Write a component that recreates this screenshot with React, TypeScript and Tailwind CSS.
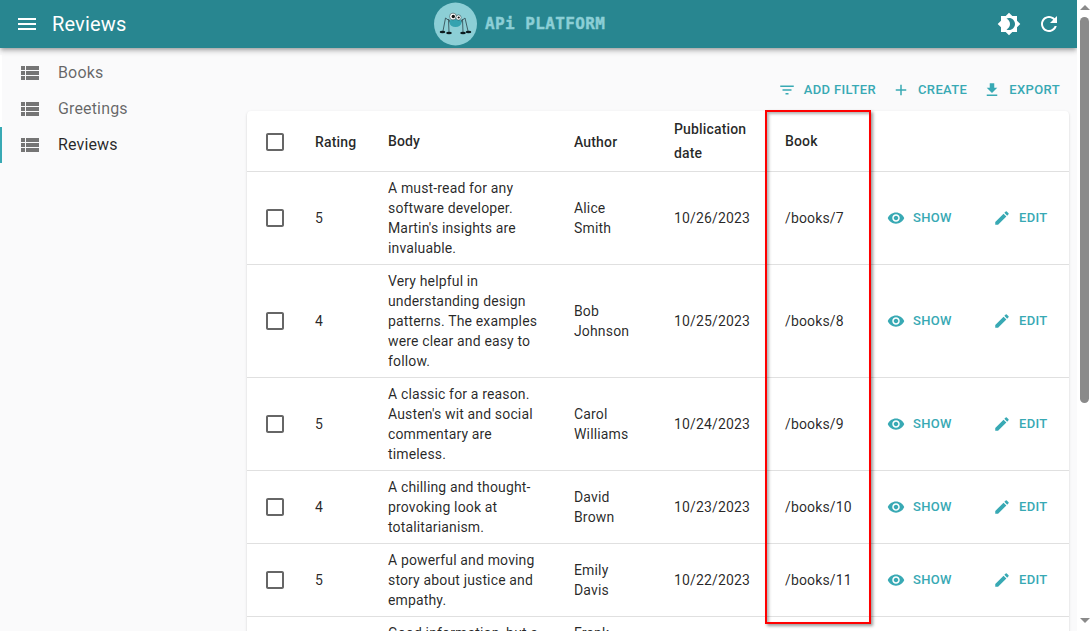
import React from "react";

const paths = {
  menu: "M3 18h18v-2H3v2zm0-5h18v-2H3v2zm0-7v2h18V6H3z",
  list: "M3 14h4v-4H3v4zm0 5h4v-4H3v4zM3 9h4V5H3v4zm5 5h13v-4H8v4zm0 5h13v-4H8v4zM8 5v4h13V5H8z",
  theme:
    "M20 8.69V4h-4.69L12 .69 8.69 4H4v4.69L.69 12 4 15.31V20h4.69L12 23.31 15.31 20H20v-4.69L23.31 12 20 8.69zM12 18c-.89 0-1.74-.2-2.5-.55C11.56 16.5 13 14.42 13 12s-1.44-4.5-3.5-5.45C10.26 6.2 11.11 6 12 6c3.31 0 6 2.69 6 6s-2.69 6-6 6z",
  refresh:
    "M17.65 6.35C16.2 4.9 14.21 4 12 4c-4.42 0-7.99 3.58-7.99 8s3.57 8 7.99 8c3.73 0 6.84-2.55 7.73-6h-2.08c-.82 2.33-3.04 4-5.65 4-3.31 0-6-2.69-6-6s2.69-6 6-6c1.66 0 3.14.69 4.22 1.78L13 11h7V4l-2.35 2.35z",
  filter: "M10 18h4v-2h-4v2zM3 6v2h18V6H3zm3 7h12v-2H6v2z",
  add: "M19 13h-6v6h-2v-6H5v-2h6V5h2v6h6v2z",
  download: "M19 9h-4V3H9v6H5l7 7 7-7zM5 18v2h14v-2H5z",
  eye: "M12 4.5C7 4.5 2.73 7.61 1 12c1.73 4.39 6 7.5 11 7.5s9.27-3.11 11-7.5c-1.73-4.39-6-7.5-11-7.5zM12 17c-2.76 0-5-2.24-5-5s2.24-5 5-5 5 2.24 5 5-2.24 5-5 5zm0-8c-1.66 0-3 1.34-3 3s1.34 3 3 3 3-1.34 3-3-1.34-3-3-3z",
  edit: "M3 17.25V21h3.75L17.81 9.94l-3.75-3.75L3 17.25zM20.71 7.04c.39-.39.39-1.02 0-1.41l-2.34-2.34a.9959.9959 0 0 0-1.41 0l-1.83 1.83 3.75 3.75 1.83-1.83z",
  box: "M19 5v14H5V5h14m0-2H5c-1.1 0-2 .9-2 2v14c0 1.1.9 2 2 2h14c1.1 0 2-.9 2-2V5c0-1.1-.9-2-2-2z",
};

function Icon({ d, className }: { d: string; className: string }) {
  return (
    <svg viewBox="0 0 24 24" fill="currentColor" className={className}>
      <path d={d} />
    </svg>
  );
}

const reviews = [
  { rating: 5, body: "A must-read for any software developer. Martin's insights are invaluable.", author: "Alice Smith", date: "10/26/2023", book: "/books/7" },
  { rating: 4, body: "Very helpful in understanding design patterns. The examples were clear and easy to follow.", author: "Bob Johnson", date: "10/25/2023", book: "/books/8" },
  { rating: 5, body: "A classic for a reason. Austen's wit and social commentary are timeless.", author: "Carol Williams", date: "10/24/2023", book: "/books/9" },
  { rating: 4, body: "A chilling and thought-provoking look at totalitarianism.", author: "David Brown", date: "10/23/2023", book: "/books/10" },
  { rating: 5, body: "A powerful and moving story about justice and empathy.", author: "Emily Davis", date: "10/22/2023", book: "/books/11" },
  { rating: 3, body: "Good information, but a bit dry.", author: "Frank Miller", date: "10/21/2023", book: "/books/12" },
];

function Logo() {
  return (
    <div className="flex items-center gap-[7px]">
      <svg viewBox="0 0 44 44" className="h-[44px] w-[44px]">
        <circle cx="21.5" cy="22" r="21.5" fill="#8ccfd6" />
        {/* legs */}
        <g fill="none" stroke="#3f5f66" strokeWidth="1">
          <path d="M17 20 L11.5 16 L9 29" />
          <path d="M17 22 L14.5 17 L15 30" />
          <path d="M26 20 L31 16 L34 29" />
          <path d="M26 22 L28.5 17 L29 30" />
        </g>
        <ellipse cx="21.5" cy="20.5" rx="6" ry="4.5" fill="#34a3b0" />
        <circle cx="19" cy="14.5" r="3.4" fill="#fff" stroke="#27494f" strokeWidth="0.6" />
        <circle cx="24.5" cy="15.5" r="2.6" fill="#fff" stroke="#27494f" strokeWidth="0.6" />
        <circle cx="19.3" cy="14.5" r="1.7" fill="#111" />
        <circle cx="24.7" cy="15.5" r="1.1" fill="#111" />
        <g fill="#0c1c20">
          <ellipse cx="8.5" cy="30" rx="2.8" ry="1.3" />
          <ellipse cx="15" cy="31" rx="2.8" ry="1.3" />
          <ellipse cx="29" cy="31" rx="2.8" ry="1.3" />
          <ellipse cx="34.5" cy="30" rx="2.8" ry="1.3" />
        </g>
      </svg>
      <span className="font-['DejaVu_Sans_Mono',monospace] text-[16px] font-bold tracking-[0.4px] text-[#8ccfd6] [-webkit-text-stroke:0.4px_#8ccfd6]">
        APi PLATFORM
      </span>
    </div>
  );
}

function ToolButton({ d, label }: { d: string; label: string }) {
  return (
    <button className="flex items-center gap-2 text-[13px] font-medium uppercase leading-[30px] tracking-[0.37px] text-[#38a9b4]">
      <Icon d={d} className="h-[18px] w-[18px]" />
      {label}
    </button>
  );
}

function NavItem({ label, active }: { label: string; active?: boolean }) {
  return (
    <div
      className={`flex h-9 items-center gap-4 border-l-[2px] pl-4 text-base tracking-[0.15px] ${
        active ? "border-[#38a9b4] text-black/85" : "border-white text-black/60"
      }`}
    >
      <Icon d={paths.list} className="h-6 w-6 text-[#757575]" />
      <span>{label}</span>
    </div>
  );
}

function ActionLink({ d, label }: { d: string; label: string }) {
  return (
    <span className="flex items-center gap-2 text-[13px] font-medium uppercase tracking-[0.33px] text-[#38a9b4]">
      <Icon d={d} className="h-[18px] w-[18px]" />
      {label}
    </span>
  );
}

export default function App() {
  return (
    <div className="relative flex h-[631px] w-[1092px] overflow-hidden bg-white font-['Roboto',sans-serif] text-black/85">
      <div className="flex h-full w-[1077px] flex-col overflow-hidden bg-[#fafafb]">
        {/* App bar */}
        <header className="relative z-10 flex h-12 shrink-0 items-center bg-[#288690] text-white shadow-[0_2px_4px_-1px_rgba(0,0,0,0.3),0_4px_5px_0_rgba(0,0,0,0.14)]">
          <div className="flex w-[434px] items-center pl-[15px]">
            <Icon d={paths.menu} className="h-6 w-6" />
            <span className="ml-[13px] text-xl tracking-[0.15px]">Reviews</span>
          </div>
          <Logo />
          <div className="ml-auto flex items-center gap-4 pr-4">
            <Icon d={paths.theme} className="h-6 w-6" />
            <Icon d={paths.refresh} className="h-6 w-6" />
          </div>
        </header>

        <div className="flex min-h-0 flex-1">
          {/* Sidebar */}
          <nav className="w-[247px] shrink-0 pt-[7px]">
            <NavItem label="Books" />
            <NavItem label="Greetings" />
            <NavItem label="Reviews" active />
          </nav>

          {/* Content */}
          <main className="min-w-0 flex-1 pr-2">
            <div className="flex h-[63px] items-start justify-end gap-4 pr-[9px] pt-[27px]">
              <ToolButton d={paths.filter} label="Add filter" />
              <ToolButton d={paths.add} label="Create" />
              <ToolButton d={paths.download} label="Export" />
            </div>
            <div className="rounded bg-white shadow-[0_2px_1px_-1px_rgba(0,0,0,0.2),0_1px_1px_0_rgba(0,0,0,0.14),0_1px_3px_0_rgba(0,0,0,0.12)]">
              <table className="w-[822px] table-fixed border-collapse text-left text-sm leading-5 tracking-[0.15px]">
                <colgroup>
                  <col className="w-[52px]" />
                  <col className="w-[73px]" />
                  <col className="w-[186px]" />
                  <col className="w-[100px]" />
                  <col className="w-[111px]" />
                  <col className="w-[102px]" />
                  <col className="w-[106px]" />
                  <col className="w-[92px]" />
                </colgroup>
                <thead>
                  <tr className="h-[60px] border-b border-[#e0e0e0] text-sm font-medium leading-6">
                    <th className="pl-4 pt-[2px] font-medium">
                      <Icon d={paths.box} className="h-6 w-6 text-[#666]" />
                    </th>
                    <th className="pl-4 pt-[2px] font-medium">Rating</th>
                    <th className="pl-4 font-medium">Body</th>
                    <th className="pl-4 pt-[2px] font-medium">Author</th>
                    <th className="pl-4 pr-2 font-medium">Publication date</th>
                    <th className="pl-4 font-medium">Book</th>
                    <th />
                    <th />
                  </tr>
                </thead>
                <tbody>
                  {reviews.map((r) => (
                    <tr key={r.book} className="border-b border-[#e0e0e0]">
                      <td className="py-[6px] pl-4">
                        <Icon d={paths.box} className="h-6 w-6 text-[#666]" />
                      </td>
                      <td className="py-[6px] pl-4">{r.rating}</td>
                      <td className="py-[6px] pl-4 pr-4">{r.body}</td>
                      <td className="py-[6px] pl-4 pr-4">{r.author}</td>
                      <td className="py-[6px] pl-4">{r.date}</td>
                      <td className="py-[6px] pl-4">{r.book}</td>
                      <td className="py-[6px] pl-4">
                        <ActionLink d={paths.eye} label="Show" />
                      </td>
                      <td className="py-[6px] pl-4">
                        <ActionLink d={paths.edit} label="Edit" />
                      </td>
                    </tr>
                  ))}
                </tbody>
              </table>
            </div>
          </main>
        </div>
      </div>

      {/* Scrollbar */}
      <div className="flex w-[15px] shrink-0 flex-col items-center bg-white">
        <div className="mt-[5px] h-0 w-0 border-x-[5px] border-b-[5px] border-x-transparent border-b-[#8a8a8a]" />
        <div className="mt-[7px] h-[386px] w-[9px] rounded-[5px] bg-[#8a8a8a]" />
        <div className="mt-[215px] h-0 w-0 border-x-[5px] border-t-[5px] border-x-transparent border-t-[#8a8a8a]" />
      </div>

      {/* Highlight drawn over the Book column */}
      <div className="pointer-events-none absolute left-[765px] top-[110px] z-20 h-[514px] w-[106px] border-2 border-[#ff0000] shadow-[2px_2px_3px_rgba(0,0,0,0.4),inset_2px_2px_3px_rgba(0,0,0,0.3)]" />
    </div>
  );
}
